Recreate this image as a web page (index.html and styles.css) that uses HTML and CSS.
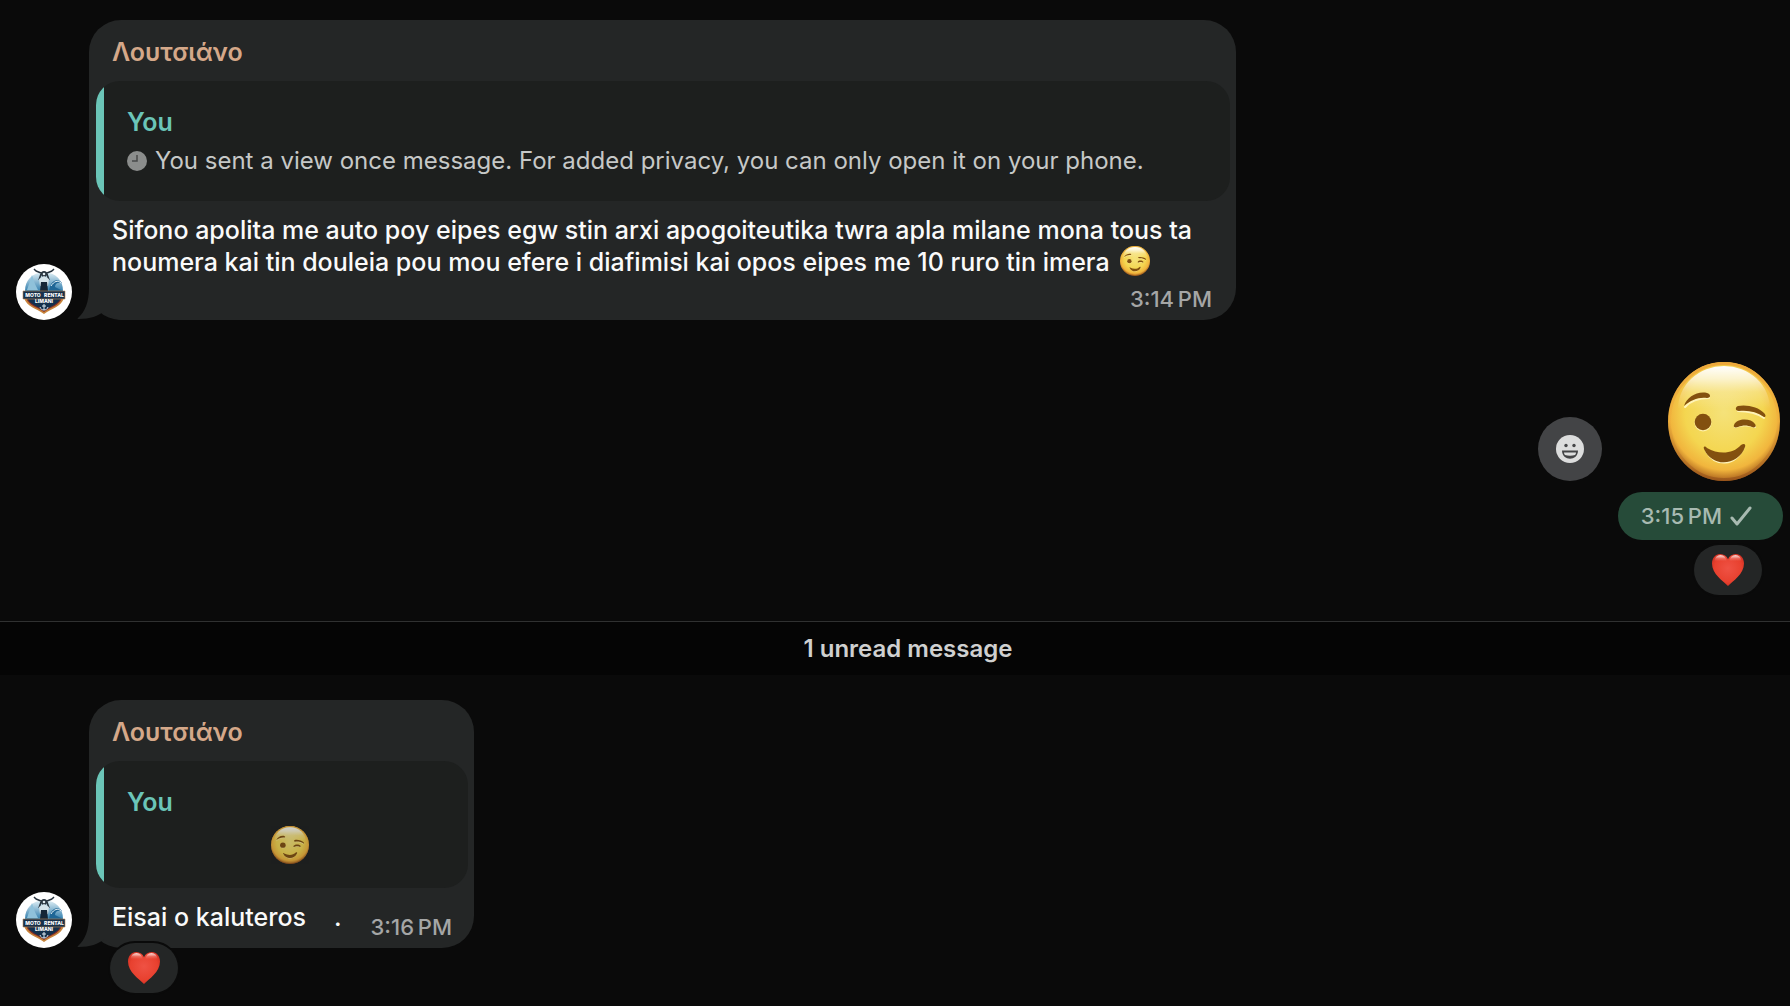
FILE: index.html
```html
<!DOCTYPE html>
<html lang="en">
<head>
  <meta charset="UTF-8" />
  <meta name="viewport" content="width=device-width, initial-scale=1.0"/>
  <title>Chat</title>
  <link rel="stylesheet" href="styles.css">
</head>
<body>
  <!-- shared drawings -->
  <svg class="sprite" aria-hidden="true">
    <defs>
      <radialGradient id="face" cx="50%" cy="42%" r="58%">
        <stop offset="0" stop-color="#f5e27a"/>
        <stop offset="0.6" stop-color="#f4d650"/>
        <stop offset="0.84" stop-color="#f1b53d"/>
        <stop offset="1" stop-color="#a9601c"/>
      </radialGradient>
      <linearGradient id="shine" x1="0" y1="0" x2="0" y2="1">
        <stop offset="0" stop-color="#fff"/>
        <stop offset="0.15" stop-color="#fff" stop-opacity="0.7"/>
        <stop offset="0.3" stop-color="#fff" stop-opacity="0.25"/>
        <stop offset="0.5" stop-color="#fff" stop-opacity="0"/>
      </linearGradient>
      <linearGradient id="rim" x1="0" y1="0" x2="0" y2="1">
        <stop offset="0" stop-color="#eda83a"/>
        <stop offset="0.5" stop-color="#eda83a" stop-opacity="0.3"/>
        <stop offset="1" stop-color="#93501a" stop-opacity="0.7"/>
      </linearGradient>
      <radialGradient id="red" cx="50%" cy="45%" r="60%">
        <stop offset="0" stop-color="#ef5244"/>
        <stop offset="0.7" stop-color="#e8412f"/>
        <stop offset="1" stop-color="#cf2d20"/>
      </radialGradient>
      <linearGradient id="sea" x1="0" y1="0" x2="0" y2="1">
        <stop offset="0" stop-color="#e4f2f7"/>
        <stop offset="1" stop-color="#337fae"/>
      </linearGradient>
    </defs>
    <symbol id="wink" viewBox="0 0 112 119" preserveAspectRatio="none">
      <ellipse cx="56" cy="59.500" rx="56" ry="59.500" fill="url(#face)"/>
      <ellipse cx="56" cy="59.500" rx="54.500" ry="58" fill="none" stroke="url(#rim)" stroke-width="3"/>
      <ellipse cx="56" cy="47" rx="46" ry="43" fill="url(#shine)"/>
      <g fill="none" stroke="#fff3b8" stroke-width="2" stroke-linecap="round">
        <path d="M17 45c6-7 14-9 24-9M70 49c12 0 19 2 26 7M67 65c6-2 14-2 20 0M38 89c9 16 29 16 38-4"/>
      </g>
      <circle cx="35" cy="61" r="8.500" fill="#fff0a8"/>
      <circle cx="35" cy="60" r="8.300" fill="#83500f"/>
      <g fill="#83500f">
        <path d="M16 44C19 35 29 29 39 31c4 1 4 5 0 5-9-1-16 2-23 8z"/>
        <path d="M70 44c8-2 21 1 26 7 2 2 2 4 0 4-7-5-15-7-25-6-4 0-4-4-1-5z"/>
        <path d="M66 63c3-7 17-7 21-1 2 3-1 4-3 3-5-2-9-2-14 0-3 1-5 0-4-2z"/>
        <path d="M36 87c-1-3 1-3 3-1 12 7 26 6 34-3 3-2 5-1 4 2-6 18-32 22-41 2z"/>
      </g>
    </symbol>
    <symbol id="heart" viewBox="0 0 34 34">
      <path d="M17 33C12 28 1 21 1 10.500 1 5 4.500 1 9.200 1 13 1 15.800 3.200 17 6.200 18.200 3.200 21 1 24.800 1 29.500 1 33 5 33 10.500 33 21 22 28 17 33z" fill="url(#red)"/>
      <ellipse cx="9.500" cy="8" rx="6" ry="6" fill="url(#shine)" opacity="0.8"/>
      <ellipse cx="24.500" cy="8" rx="6" ry="6" fill="url(#shine)" opacity="0.8"/>
    </symbol>
    <symbol id="logo" viewBox="0 0 56 56">
      <circle cx="28" cy="28" r="28" fill="#fff"/>
      <path d="M9 27c0-11 7-18 19-19 12 1 19 8 19 19z" fill="url(#sea)"/>
      <path d="M11 26l5-15 3 9 3 6z" fill="#8fc1da"/>
      <path d="M33 27c1-10 8-14 13-8-4-1-7 0-7 4l8 4z" fill="#1f6696"/>
      <path d="M35 22c3-5 7-6 10-3" fill="none" stroke="#e8f5fa" stroke-width="1"/>
      <path d="M20 7l5 2h6l5-2M20 7l-2-2M36 7l2-2M25 10l-2 6M31 10l2 6" fill="none" stroke="#25313c" stroke-width="1.500"/>
      <circle cx="28" cy="10" r="3" fill="#25313c"/>
      <circle cx="28" cy="10" r="1.300" fill="#dfeaf0"/>
      <path d="M23 15l5-3 5 3-1 7h-8z" fill="#d4e3ea"/>
      <path d="M25 18h6l1 9h-8z" fill="#152637"/>
      <path d="M8 34c3 9 12 10 20 16 8-6 17-7 20-16z" fill="#c6843b"/>
      <path d="M10 34c3 8 11 9 18 14 7-5 15-6 18-14z" fill="#8c2f24"/>
      <path d="M11 34c3 7 10 8 17 13 7-5 14-6 17-13z" fill="#14304c"/>
      <path d="M7 27h42v8H7z" fill="#18304a" stroke="#b88656" stroke-width="0.600"/>
      <path d="M28 40v6M26 42h4M24 43c1 4 7 4 8 0" fill="none" stroke="#dbe6ef" stroke-width="1"/>
    </symbol>
    <symbol id="tail" viewBox="0 0 44 40">
      <path d="M12 0v8C12 22 8 32 1 38c-1 1 0 1 1 1 11 0 19-3 26-8 4 4 9 8 16 9V0z" fill="#242626"/>
    </symbol>
  </svg>

  <main class="chat">
    <article class="message incoming">
      <svg class="avatar" viewBox="0 0 56 56" role="img" aria-label="Moto Rental Limani">
        <use href="#logo"/>
        <text x="17" y="33" font-size="5">MOTO</text>
        <text x="38" y="33" font-size="5">RENTAL</text>
        <text x="28" y="39" font-size="5">LIMANI</text>
      </svg>
      <div class="bubble bubble-wide">
        <svg class="tail" aria-hidden="true"><use href="#tail"/></svg>
        <h2 class="sender">Λουτσιάνο</h2>
        <blockquote class="quote">
          <strong class="quote-author">You</strong>
          <p class="quote-text">
            <svg class="clock" viewBox="0 0 20 20" aria-hidden="true"><circle cx="10" cy="10" r="10" fill="#8b8d8c"/><path d="M10 4v6H5" fill="none" stroke="#484a49" stroke-width="1.500"/></svg>
            You sent a view once message. For added privacy, you can only open it on your phone.
          </p>
        </blockquote>
        <p class="text">Sifono apolita me auto poy eipes egw stin arxi apogoiteutika twra apla milane mona tous ta<br>noumera kai tin douleia pou mou efere i diafimisi kai opos eipes me 10 ruro tin imera <svg class="emoji" role="img" aria-label="wink"><use href="#wink"/></svg></p>
        <time class="time">3:14&#8239;PM</time>
      </div>
    </article>

    <article class="message outgoing">
      <div class="sticker-row">
        <button class="react" type="button" aria-label="React">
          <svg viewBox="0 0 28 28" aria-hidden="true">
            <circle cx="14" cy="14" r="14" fill="#dcdddd"/>
            <circle cx="10" cy="10.500" r="1.700" fill="#434446"/>
            <circle cx="18" cy="10.500" r="1.700" fill="#434446"/>
            <path d="M6 15.500h16c0 11-16 11-16 0z" fill="#434446"/>
            <path d="M8 17.500h12c0 1-.5 2-1 2.500-3 1-7 1-10 0-.5-.5-1-1.500-1-2.500z" fill="#dcdddd"/>
          </svg>
        </button>
        <svg class="sticker" role="img" aria-label="wink"><use href="#wink"/></svg>
      </div>
      <div class="sent">
        <time>3:15&#8239;PM</time>
        <svg class="check" viewBox="0 0 22 20" aria-hidden="true"><path d="M2 12l5 6L20 2" fill="none" stroke="#a8bab1" stroke-width="3" stroke-linecap="round" stroke-linejoin="round"/></svg>
      </div>
      <button class="reaction" type="button" aria-label="Heart reaction"><svg><use href="#heart"/></svg></button>
    </article>

    <div class="unread">1 unread message</div>

    <article class="message incoming">
      <svg class="avatar" viewBox="0 0 56 56" role="img" aria-label="Moto Rental Limani">
        <use href="#logo"/>
        <text x="17" y="33" font-size="5">MOTO</text>
        <text x="38" y="33" font-size="5">RENTAL</text>
        <text x="28" y="39" font-size="5">LIMANI</text>
      </svg>
      <div class="bubble bubble-short">
        <svg class="tail" aria-hidden="true"><use href="#tail"/></svg>
        <h2 class="sender">Λουτσιάνο</h2>
        <blockquote class="quote">
          <strong class="quote-author">You</strong>
          <p class="quote-emoji"><svg role="img" aria-label="wink"><use href="#wink"/></svg></p>
        </blockquote>
        <div class="last-line">
          <p class="text">Eisai o kaluteros</p>
          <span class="text">.</span>
          <time class="time">3:16&#8239;PM</time>
        </div>
        <button class="reaction reaction-over" type="button" aria-label="Heart reaction"><svg><use href="#heart"/></svg></button>
      </div>
    </article>
  </main>
</body>
</html>
```
FILE: styles.css
```css
* {
  box-sizing: border-box;
  font-family: Inter, "Liberation Sans", sans-serif;
}

body {
  margin: 0;
  background-color: #0a0a0a;
  color: #fafafa;
}

h2,
p,
blockquote {
  margin: 0;
}

svg {
  display: block;
}

.sprite {
  position: absolute;
  width: 0;
  height: 0;
}

.chat {
  padding: 20px 0 56px;
}

.message {
  display: flex;
}

.incoming {
  align-items: flex-end;
  gap: 17px;
  padding: 0 16px;
}

.avatar {
  width: 56px;
  height: 56px;
  flex-shrink: 0;
}

.avatar text {
  fill: #fff;
  font-weight: 800;
  text-anchor: middle;
}

.bubble {
  position: relative;
  z-index: 0;
  padding: 16px 6px 7px 7px;
  border-radius: 32px;
  background-color: #242626;
}

.bubble-wide {
  width: 1147px;
}

.bubble-short {
  width: 385px;
}

.tail {
  position: absolute;
  z-index: -1;
  left: -12px;
  bottom: 0;
  width: 44px;
  height: 40px;
}

.sender {
  padding: 0 16px;
  font-size: 25px;
  font-weight: 600;
  line-height: 32px;
  color: #d5a889;
}

.quote {
  position: relative;
  margin-top: 13px;
  padding: 25px 16px 24px 31px;
  border-radius: 24px;
  background-color: #1d1f1e;
  overflow: hidden;
}

.quote::before {
  content: "";
  position: absolute;
  left: 0;
  top: 0;
  bottom: 0;
  width: 8px;
  background-color: #6bc5b8;
}

.quote-author {
  display: block;
  font-size: 25px;
  font-weight: 600;
  line-height: 32px;
  color: #6bc5b8;
}

.quote-text {
  display: flex;
  align-items: center;
  gap: 8px;
  margin-top: 7px;
  font-size: 24px;
  line-height: 32px;
  color: #c6c8c7;
}

.clock {
  width: 20px;
  height: 20px;
}

.quote-emoji {
  display: flex;
  justify-content: center;
  margin-top: 8px;
}

.quote-emoji svg {
  width: 38px;
  height: 38px;
  opacity: 0.8;
}

.text {
  font-size: 25px;
  font-weight: 500;
  line-height: 32px;
}

.bubble > .text {
  margin-top: 13px;
  padding: 0 16px;
}

.emoji {
  display: inline-block;
  width: 30px;
  height: 30px;
  margin-left: 4px;
  vertical-align: -5px;
}

.time {
  display: block;
  padding: 0 18px;
  font-size: 22px;
  font-weight: 500;
  line-height: 28px;
  text-align: right;
  color: #a5a6a6;
}

.bubble > .time {
  margin-top: 7px;
}

.outgoing {
  flex-direction: column;
  align-items: flex-end;
  margin-top: 42px;
  padding-right: 7px;
}

.sticker-row {
  display: flex;
  align-items: flex-end;
  gap: 66px;
  padding-right: 3px;
}

.sticker {
  width: 112px;
  height: 119px;
}

.react {
  display: flex;
  align-items: center;
  justify-content: center;
  width: 64px;
  height: 64px;
  padding: 0;
  border: none;
  border-radius: 50%;
  background-color: #434446;
  cursor: pointer;
}

.react svg {
  width: 28px;
  height: 28px;
}

.sent {
  display: flex;
  align-items: center;
  gap: 8px;
  height: 48px;
  margin-top: 11px;
  padding: 0 31px 0 23px;
  border-radius: 24px;
  background-color: #264b39;
  font-size: 22px;
  font-weight: 500;
  color: #a8bab1;
}

.check {
  width: 22px;
  height: 20px;
}

.reaction {
  display: flex;
  align-items: center;
  justify-content: center;
  width: 68px;
  height: 50px;
  margin: 5px 21px 0 0;
  padding: 0;
  border: none;
  border-radius: 25px;
  background-color: #242626;
  box-shadow: 0 0 0 2px #0a0a0a;
  cursor: pointer;
}

.reaction svg {
  width: 34px;
  height: 34px;
}

.reaction-over {
  position: absolute;
  left: 21px;
  bottom: -45px;
  margin: 0;
}

.unread {
  margin: 26px 0 25px;
  padding: 11px 0 10px 26px;
  border-top: 1px solid #303131;
  background-color: #050505;
  font-size: 24px;
  font-weight: 600;
  line-height: 32px;
  text-align: center;
  color: #cfd0d0;
}

.last-line {
  display: flex;
  align-items: flex-end;
  gap: 28px;
  margin-top: 13px;
  padding-left: 16px;
}

.last-line .text {
  margin-bottom: 8px;
}

.last-line .time {
  margin-left: auto;
  padding: 0 16px 0 0;
}
```
